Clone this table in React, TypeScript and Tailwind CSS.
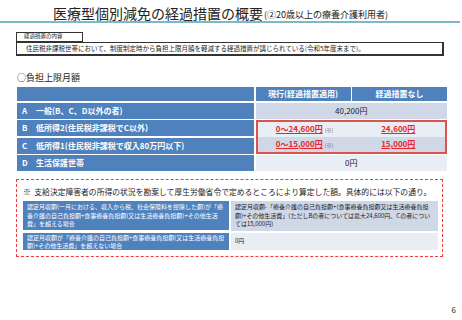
const rowLabel = "bg-[#4f81bd] text-white font-bold text-[8px] flex items-center pl-[5px]";

function Money({ value, note }: { value: string; note?: boolean }) {
  return (
    <span className="text-[#e8262a] text-[8px] font-bold">
      <span className="underline decoration-[#e8262a] underline-offset-1">{value}</span>
      {note && <span className="text-[#555] text-[5px] font-normal ml-[2px]">(※)</span>}
    </span>
  );
}

export default function App() {
  return (
    <div
      className="w-[462px] h-[320px] bg-white relative overflow-hidden text-[#222]"
      style={{ fontFamily: '"Noto Sans CJK JP", "Noto Sans", sans-serif' }}
    >
      {/* title */}
      <div className="pl-[53px] pt-[4px] h-[21px] flex items-end leading-none">
        <span className="text-[14px] leading-[16px]">医療型個別減免の経過措置の概要</span>
        <span className="text-[9px] leading-[13px] ml-[1px]">(②20歳以上の療養介護利用者)</span>
      </div>
      <div className="h-[2px] w-[460px] bg-[#7db7cc]" />

      {/* transitional measure box */}
      <div className="ml-[16px] mt-[9px] w-[428px]">
        <div className="w-[67px] h-[10px] border border-[#333] flex items-center pl-[7px] text-[5.5px] leading-none">
          経過措置の内容
        </div>
        <div className="h-[14px] border border-[#333] border-r-2 border-b-2 flex items-center pl-[9px] text-[6.5px] leading-none">
          住民税非課税世帯において、制度制定時から負担上限月額を軽減する経過措置が講じられている(令和5年度末まで)。
        </div>
      </div>

      <div className="ml-[17px] mt-[17px] text-[9px] leading-none">○負担上限月額</div>

      {/* table */}
      <div className="ml-[17px] mt-[5px] grid grid-cols-[237px_95px_95px] gap-[1.5px] w-[430px]">
        <div className="bg-[#4f81bd] h-[14px]" />
        <div className="bg-[#4f81bd] text-white text-[8px] font-bold flex items-center justify-center">
          現行(経過措置適用)
        </div>
        <div className="bg-[#4f81bd] text-white text-[8px] font-bold flex items-center justify-center">
          経過措置なし
        </div>

        <div className={`${rowLabel} h-[16px]`}>
          <span className="w-[14px]">A</span>一般(B、C、D以外の者)
        </div>
        <div className="col-span-2 bg-[#d0d8e8] text-[8px] flex items-center justify-center">40,200円</div>

        <div className={`${rowLabel} h-[16px]`}>
          <span className="w-[14px]">B</span>低所得2(住民税非課税でC以外)
        </div>
        <div className="col-span-2 row-span-2 border-2 border-[#d9534f] grid grid-cols-[94px_1fr] grid-rows-2">
          <div className="bg-[#e9edf4] flex items-center justify-center">
            <Money value="0～24,600円" note />
          </div>
          <div className="bg-[#e9edf4] flex items-center justify-center">
            <Money value="24,600円" />
          </div>
          <div className="bg-[#d0d8e8] flex items-center justify-center">
            <Money value="0～15,000円" note />
          </div>
          <div className="bg-[#d0d8e8] flex items-center justify-center">
            <Money value="15,000円" />
          </div>
        </div>
        <div className={`${rowLabel} h-[16px]`}>
          <span className="w-[14px]">C</span>低所得1(住民税非課税で収入80万円以下)
        </div>

        <div className={`${rowLabel} h-[16px]`}>
          <span className="w-[14px]">D</span>生活保護世帯
        </div>
        <div className="col-span-2 bg-[#e9edf4] text-[8px] flex items-center justify-center">0円</div>
      </div>

      {/* dashed note box */}
      <div className="ml-[16px] mt-[8px] w-[427px] h-[78px] border-[1.5px] border-dashed border-[#f03c3c] px-[6px] pt-[7px]">
        <div className="text-[7.8px] leading-[10px] whitespace-nowrap">
          ※&nbsp;&nbsp;支給決定障害者の所得の状況を勘案して厚生労働省令で定めるところにより算定した額。具体的には以下の通り。
        </div>
        <div className="mt-[4px] grid grid-cols-[206px_207px] gap-x-[2px] gap-y-[2px] text-[6px] leading-[8.5px]">
          <div className="bg-[#4f81bd] text-white px-[4px] py-[2px] h-[29px]">
            認定月収額(一月における、収入から税、社会保険料を控除した額)が「療養介護の自己負担額+食事療養負担額(又は生活療養負担額)+その他生活費」を超える場合
          </div>
          <div className="bg-[#d0d8e8] px-[4px] py-[2px]">
            認定月収額-「療養介護の自己負担額+(食事療養負担額又は生活療養負担額)+その他生活費」(ただしBの者については最大24,600円、Cの者については15,000円)
          </div>
          <div className="bg-[#4f81bd] text-white px-[4px] py-[1px] h-[17px]">
            認定月収額が「療養介護の自己負担額+食事療養負担額(又は生活療養負担額)+その他生活費」を超えない場合
          </div>
          <div className="bg-[#e9edf4] px-[4px] flex items-center">0円</div>
        </div>
      </div>

      <div className="absolute right-[6px] bottom-[6px] text-[8px] leading-none">6</div>
    </div>
  );
}
